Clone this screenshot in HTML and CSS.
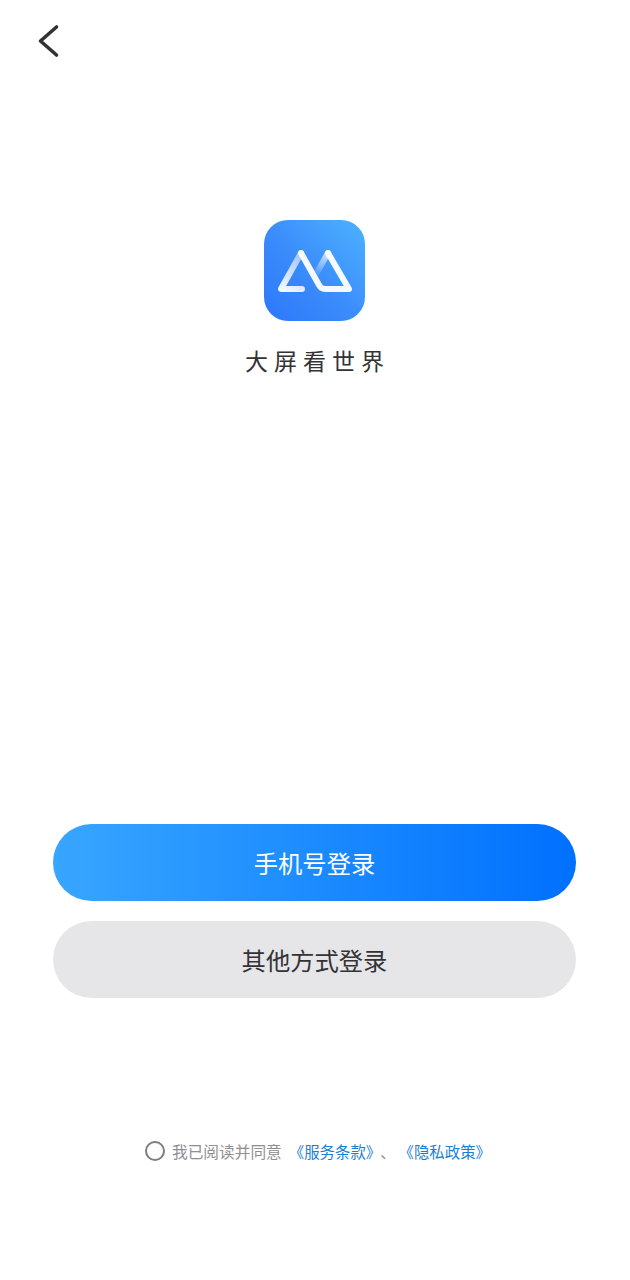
FILE: index.html

```html
<!DOCTYPE html>
<html>
<head>
  <title>登录</title>
  <meta charset="UTF-8" />
  <meta name="viewport" content="width=device-width, initial-scale=1.0"/>
  <link rel="stylesheet" href="styles.css">
</head>
<body>
  <div class="page">
    <div class="back">
      <svg width="24" height="34" viewBox="0 0 24 34">
        <path d="M19.5 3 L3.5 17 L19.5 31" fill="none" stroke="#333336" stroke-width="3.6" stroke-linecap="round" stroke-linejoin="round"/>
      </svg>
    </div>

    <div class="brand">
      <div class="logo">
        <svg width="101" height="101" viewBox="0 0 101 101">
          <defs>
            <linearGradient id="fadeLeft" x1="17" y1="69" x2="37" y2="33" gradientUnits="userSpaceOnUse">
              <stop offset="0" stop-color="#fff" stop-opacity="0.95"/>
              <stop offset="1" stop-color="#fff" stop-opacity="0.5"/>
            </linearGradient>
            <linearGradient id="fadeRight" x1="64" y1="33" x2="52" y2="54" gradientUnits="userSpaceOnUse">
              <stop offset="0" stop-color="#fff" stop-opacity="0.75"/>
              <stop offset="1" stop-color="#fff" stop-opacity="0.1"/>
            </linearGradient>
          </defs>
          <g class="logo-mark">
            <path d="M37 33 L17 69 L38 69" fill="none" stroke="url(#fadeLeft)" stroke-width="6" stroke-linecap="round" stroke-linejoin="round"/>
            <path d="M64 33 L52 54" fill="none" stroke="url(#fadeRight)" stroke-width="6" stroke-linecap="round"/>
            <path d="M37 33 L55 65 Q57 69 61 69 L85 69 L64 33" fill="none" stroke="#fff" stroke-opacity="0.95" stroke-width="6" stroke-linecap="round" stroke-linejoin="round"/>
          </g>
        </svg>
      </div>
      <div class="slogan">大屏看世界</div>
    </div>

    <div class="actions">
      <div class="btn btn-primary">手机号登录</div>
      <div class="btn btn-gray">其他方式登录</div>
    </div>

    <div class="terms">
      <span class="radio"></span>
      <span class="terms-text">我已阅读并同意</span>
      <a class="link link-first">《服务条款》</a><span class="terms-text sep">、</span><a class="link">《隐私政策》</a>
    </div>
  </div>
</body>
</html>
```

FILE: styles.css

```css
body { margin: 0; background: #fff; font-family: "Noto Sans CJK SC", "Liberation Sans", sans-serif; }
.page { height: 1280px; display: flex; flex-direction: column; overflow: hidden; }
.back { height: 34px; padding: 24px 0 0 37px; }
.brand { margin-top: 162px; padding-right: 1px; display: flex; flex-direction: column; align-items: center; }
.logo { width: 101px; height: 101px; border-radius: 24px; background: linear-gradient(225deg, #4db2ff 0%, #3a8bfb 55%, #2c78fa 100%); }
.logo svg { display: block; }
.logo-mark { filter: blur(0.5px); }
.slogan { margin-top: 22px; padding-left: 6px; font-size: 23px; line-height: 34px; letter-spacing: 6px; color: #333336; }
.actions { margin-top: 447px; padding: 0 54px 0 53px; display: flex; flex-direction: column; gap: 20px; }
.btn { height: 77px; border-radius: 39px; display: flex; align-items: center; justify-content: center; font-size: 24.3px; }
.btn-primary { background: linear-gradient(90deg, #38a6ff 0%, #0070ff 100%); color: #fff; }
.btn-gray { background: #e6e6e9; color: #333336; }
.terms { margin-top: 141px; padding-left: 145px; display: flex; align-items: center; height: 24px; font-size: 15.7px; }
.radio { box-sizing: border-box; width: 20px; height: 20px; border: 2px solid #7d7d80; border-radius: 50%; margin: -1px 7px 0 0; }
.terms-text { color: #8f8f92; }
.link { color: #1a7fd4; font-size: 15.4px; }
.link-first { margin-left: 7px; }
.sep { font-size: 15.4px; margin-left: -1px; margin-right: 3px; }
```
